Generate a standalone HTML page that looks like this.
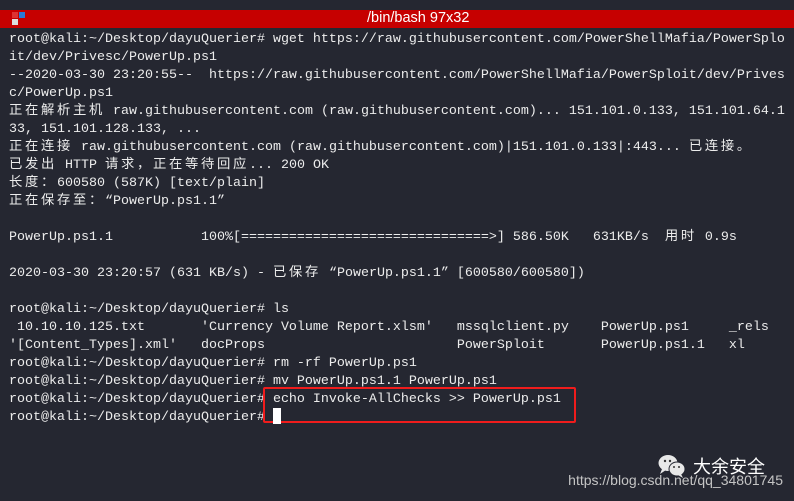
<!DOCTYPE html>
<html><head><meta charset="utf-8"><style>
body{margin:0;width:794px;height:501px;background:#252731;overflow:hidden;position:relative}
.bar{position:absolute;left:0;top:10px;width:794px;height:18px;background:#c60000}
.title{position:absolute;left:367px;top:10px;height:18px;line-height:18px;color:#fff;font:14.5px "Liberation Sans","DejaVu Sans",sans-serif}
.t{position:absolute;left:9px;top:31px;font:13.33px "Liberation Mono","Noto Sans CJK SC",monospace;color:#ececec}
.t div{height:18px;line-height:18px;overflow:visible;white-space:pre}
.c{letter-spacing:2.67px;font-family:"Noto Sans CJK SC",sans-serif;line-height:0}
.box{position:absolute;left:263px;top:387px;width:309px;height:32px;border:2px solid #f01c1c;border-radius:2px}
.cur{position:absolute;left:273px;top:408px;width:8px;height:16px;background:#fff}
.wm{position:absolute;left:693px;top:453px;color:#fff;font:18px "Noto Sans CJK SC",sans-serif}
.url{position:absolute;right:11px;top:472px;color:#c4c4c4;font:14px "Liberation Sans",sans-serif}
</style></head><body>
<div class="bar"></div>
<div style="position:absolute;left:12px;top:12px;width:6px;height:6px;background:#d33"></div>
<div style="position:absolute;left:19px;top:12px;width:6px;height:6px;background:#2a7ad6"></div>
<div style="position:absolute;left:12px;top:19px;width:6px;height:6px;background:#ddd"></div>
<div class="title">/bin/bash 97x32</div>
<div class="t"><div>root@kali:~/Desktop/dayuQuerier# wget https://raw.githubusercontent.com/PowerShellMafia/PowerSplo</div><div>it/dev/Privesc/PowerUp.ps1</div><div>--2020-03-30 23:20:55--  https://raw.githubusercontent.com/PowerShellMafia/PowerSploit/dev/Prives</div><div>c/PowerUp.ps1</div><div><span class="c">正在解析主机</span> raw.githubusercontent.com (raw.githubusercontent.com)... 151.101.0.133, 151.101.64.1</div><div>33, 151.101.128.133, ...</div><div><span class="c">正在连接</span> raw.githubusercontent.com (raw.githubusercontent.com)|151.101.0.133|:443... <span class="c">已连接。</span></div><div><span class="c">已发出</span> HTTP <span class="c">请求，正在等待回应</span>... 200 OK</div><div><span class="c">长度：</span>600580 (587K) [text/plain]</div><div><span class="c">正在保存至：</span>“PowerUp.ps1.1”</div><div></div><div>PowerUp.ps1.1           100%[===============================>] 586.50K   631KB/s  <span class="c">用时</span> 0.9s</div><div></div><div>2020-03-30 23:20:57 (631 KB/s) - <span class="c">已保存</span> “PowerUp.ps1.1” [600580/600580])</div><div></div><div>root@kali:~/Desktop/dayuQuerier# ls</div><div> 10.10.10.125.txt       'Currency Volume Report.xlsm'   mssqlclient.py    PowerUp.ps1     _rels</div><div>'[Content_Types].xml'   docProps                        PowerSploit       PowerUp.ps1.1   xl</div><div>root@kali:~/Desktop/dayuQuerier# rm -rf PowerUp.ps1</div><div>root@kali:~/Desktop/dayuQuerier# mv PowerUp.ps1.1 PowerUp.ps1</div><div>root@kali:~/Desktop/dayuQuerier# echo Invoke-AllChecks >> PowerUp.ps1</div><div>root@kali:~/Desktop/dayuQuerier# </div></div>
<div class="box"></div>
<div class="cur"></div>
<svg style="position:absolute;left:655px;top:452px" width="36" height="28" viewBox="0 0 36 28">
<ellipse cx="13" cy="11" rx="9.5" ry="8" fill="#e8e8e8"/><path d="M7 17 L5 22 L11 18Z" fill="#e8e8e8"/>
<ellipse cx="22" cy="17" rx="8.5" ry="7.5" fill="#252731"/>
<ellipse cx="22" cy="17" rx="7.5" ry="6.5" fill="#e8e8e8"/><path d="M26 22 L28 26 L23 23Z" fill="#e8e8e8"/>
<circle cx="10" cy="9" r="1.2" fill="#333"/><circle cx="15" cy="9" r="1.2" fill="#333"/>
<circle cx="19" cy="15" r="1" fill="#333"/><circle cx="24" cy="15" r="1" fill="#333"/>
</svg>
<div class="wm">大余安全</div>
<div class="url">https://blog.csdn.net/qq_34801745</div>
</body></html>
